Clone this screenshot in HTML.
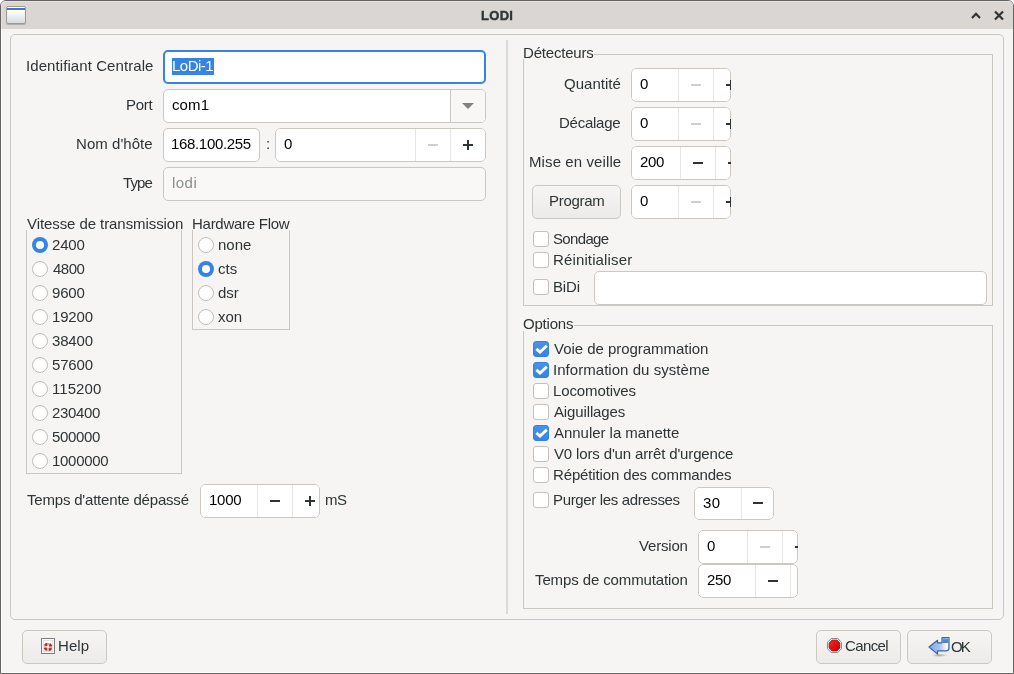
<!DOCTYPE html><html><head><meta charset="utf-8"><style>
html,body{margin:0;padding:0;width:1014px;height:674px;overflow:hidden;background:#fff}
.t{position:absolute;white-space:nowrap;line-height:20px;font-family:"Liberation Sans",sans-serif;will-change:transform}
</style></head><body>
<div style="position:absolute;left:0px;top:0px;width:1014px;height:674px;box-sizing:border-box;background:#f6f5f4;border:1px solid #656462;border-radius:6px 6px 0 0;box-shadow:inset 1px -1px 0 #fdfcfb"></div>
<div style="position:absolute;left:1px;top:1px;width:1012px;height:28px;box-sizing:border-box;background:#dad6d2;border-radius:5px 5px 0 0;box-shadow:inset 1px 1px 0 #e6e3e0"></div>
<div style="position:absolute;left:6px;top:6px;width:20px;height:18px;box-sizing:border-box;background:linear-gradient(#ffffff 20%,#d8dcdc);border:1px solid #9a9a9a;border-radius:2px;box-shadow:0 1px 0 #b0b0b0"></div>
<div style="position:absolute;left:7px;top:8px;width:18px;height:2px;box-sizing:border-box;background:#4b78b6"></div>
<div class="t" style="left:481.00px;top:6px;color:#2e3436;font-size:13px;font-weight:bold;letter-spacing:0.300px;color:#2e3436;-webkit-text-stroke:0.4px #2e3436;">LODI</div>
<svg style="position:absolute;left:968px;top:8px" width="16" height="14"><path d="M4 10 L8 5.8 L12 10" fill="none" stroke="#2e3436" stroke-width="2.2"/></svg>
<svg style="position:absolute;left:990px;top:8px" width="18" height="16"><path d="M5 3.5 L13 11.5 M13 3.5 L5 11.5" fill="none" stroke="#2e3436" stroke-width="2.2"/></svg>
<div style="position:absolute;left:10px;top:34px;width:994px;height:586px;box-sizing:border-box;border:1px solid #cdc7c2;border-radius:5px"></div>
<div style="position:absolute;left:506px;top:40px;width:2px;height:574px;box-sizing:border-box;background:#dcdad7"></div>
<div class="t" style="left:26.00px;top:56px;color:#2e3436;font-size:15px;font-weight:normal;letter-spacing:0.079px;">Identifiant Centrale</div>
<div style="position:absolute;left:163px;top:50px;width:323px;height:34px;box-sizing:border-box;background:#fff;border:2px solid #3584e4;border-radius:5px"></div>
<div style="position:absolute;left:172px;top:58px;width:42px;height:17px;box-sizing:border-box;background:#3584e4"></div>
<div class="t" style="left:172.00px;top:56px;color:#fff;font-size:15px;font-weight:normal;letter-spacing:-0.500px;">LoDi-1</div>
<div class="t" style="left:126.00px;top:95px;color:#2e3436;font-size:15px;font-weight:normal;letter-spacing:-0.300px;">Port</div>
<div style="position:absolute;left:163px;top:89px;width:323px;height:34px;box-sizing:border-box;background:#fff;border:1px solid #cdc7c2;border-radius:5px;overflow:hidden"><div style="position:absolute;left:286px;top:0;width:36px;height:34px;background:#f8f7f6;border-left:1px solid #cdc7c2"></div></div>
<svg style="position:absolute;left:461px;top:102px" width="14" height="8"><path d="M1 1 L13 1 L7 7 Z" fill="#7e8283"/></svg>
<div class="t" style="left:172.00px;top:95px;color:#000;font-size:15px;font-weight:normal;letter-spacing:0.100px;">com1</div>
<div class="t" style="left:76.00px;top:134px;color:#2e3436;font-size:15px;font-weight:normal;letter-spacing:0.044px;">Nom d'hôte</div>
<div style="position:absolute;left:163px;top:128px;width:97px;height:34px;box-sizing:border-box;background:#fff;border:1px solid #cdc7c2;border-radius:5px"></div>
<div class="t" style="left:171.00px;top:134px;color:#000;font-size:15px;font-weight:normal;letter-spacing:-0.330px;">168.100.255</div>
<div class="t" style="left:266.00px;top:134px;color:#2e3436;font-size:15px;font-weight:normal;letter-spacing:0.000px;">:</div>
<div style="position:absolute;left:275px;top:128px;width:211px;height:34px;background:#fff;border-radius:5px;overflow:hidden">
<div style="position:absolute;left:0;top:0;width:211px;height:34px;box-sizing:border-box;border:1px solid #cdc7c2;border-radius:5px"></div>
<div style="position:absolute;left:140px;top:1px;width:1px;height:32px;background:#e8e6e3"></div>
<div style="position:absolute;left:175px;top:1px;width:1px;height:32px;background:#e8e6e3"></div>
<div style="position:absolute;left:153px;top:16px;width:10px;height:2px;background:#cfcfcf"></div>
<div style="position:absolute;left:188px;top:16px;width:10px;height:2px;background:#2e3436"></div>
<div style="position:absolute;left:192px;top:12px;width:2px;height:10px;background:#2e3436"></div>
</div>
<div class="t" style="left:284.00px;top:134px;color:#000;font-size:15px;font-weight:normal;letter-spacing:0.000px;">0</div>
<div class="t" style="left:123.00px;top:173px;color:#2e3436;font-size:15px;font-weight:normal;letter-spacing:-0.867px;">Type</div>
<div style="position:absolute;left:163px;top:167px;width:323px;height:34px;box-sizing:border-box;background:#f9f8f7;border:1px solid #cdc7c2;border-radius:5px"></div>
<div class="t" style="left:172.00px;top:173px;color:#8b8e8f;font-size:15px;font-weight:normal;letter-spacing:0.467px;">lodi</div>
<div class="t" style="left:27.00px;top:214px;color:#2e3436;font-size:15px;font-weight:normal;letter-spacing:-0.077px;">Vitesse de transmission</div>
<div style="position:absolute;left:26px;top:230px;width:156px;height:244px;box-sizing:border-box;border:1px solid #cdc7c2;border-top:none"></div>
<div class="t" style="left:192.00px;top:214px;color:#2e3436;font-size:15px;font-weight:normal;letter-spacing:-0.267px;">Hardware Flow</div>
<div style="position:absolute;left:192px;top:230px;width:98px;height:100px;box-sizing:border-box;border:1px solid #cdc7c2;border-top:none"></div>
<div style="position:absolute;left:32px;top:237px;width:16px;height:16px;box-sizing:border-box;background:#3584e4;border-radius:50%"></div>
<div style="position:absolute;left:36px;top:241px;width:8px;height:8px;box-sizing:border-box;background:#fff;border-radius:50%"></div>
<div class="t" style="left:52.00px;top:235px;color:#2e3436;font-size:15px;font-weight:normal;letter-spacing:-0.193px;">2400</div>
<div style="position:absolute;left:32px;top:261px;width:16px;height:16px;box-sizing:border-box;background:#fff;border:1px solid #c2bcb6;border-radius:50%"></div>
<div class="t" style="left:53.00px;top:259px;color:#2e3436;font-size:15px;font-weight:normal;letter-spacing:-0.527px;">4800</div>
<div style="position:absolute;left:32px;top:285px;width:16px;height:16px;box-sizing:border-box;background:#fff;border:1px solid #c2bcb6;border-radius:50%"></div>
<div class="t" style="left:52.00px;top:283px;color:#2e3436;font-size:15px;font-weight:normal;letter-spacing:-0.193px;">9600</div>
<div style="position:absolute;left:32px;top:309px;width:16px;height:16px;box-sizing:border-box;background:#fff;border:1px solid #c2bcb6;border-radius:50%"></div>
<div class="t" style="left:52.00px;top:307px;color:#2e3436;font-size:15px;font-weight:normal;letter-spacing:-0.162px;">19200</div>
<div style="position:absolute;left:32px;top:333px;width:16px;height:16px;box-sizing:border-box;background:#fff;border:1px solid #c2bcb6;border-radius:50%"></div>
<div class="t" style="left:52.00px;top:331px;color:#2e3436;font-size:15px;font-weight:normal;letter-spacing:-0.162px;">38400</div>
<div style="position:absolute;left:32px;top:357px;width:16px;height:16px;box-sizing:border-box;background:#fff;border:1px solid #c2bcb6;border-radius:50%"></div>
<div class="t" style="left:52.00px;top:355px;color:#2e3436;font-size:15px;font-weight:normal;letter-spacing:-0.162px;">57600</div>
<div style="position:absolute;left:32px;top:381px;width:16px;height:16px;box-sizing:border-box;background:#fff;border:1px solid #c2bcb6;border-radius:50%"></div>
<div class="t" style="left:52.00px;top:379px;color:#2e3436;font-size:15px;font-weight:normal;letter-spacing:0.056px;">115200</div>
<div style="position:absolute;left:32px;top:405px;width:16px;height:16px;box-sizing:border-box;background:#fff;border:1px solid #c2bcb6;border-radius:50%"></div>
<div class="t" style="left:52.00px;top:403px;color:#2e3436;font-size:15px;font-weight:normal;letter-spacing:-0.344px;">230400</div>
<div style="position:absolute;left:32px;top:429px;width:16px;height:16px;box-sizing:border-box;background:#fff;border:1px solid #c2bcb6;border-radius:50%"></div>
<div class="t" style="left:52.00px;top:427px;color:#2e3436;font-size:15px;font-weight:normal;letter-spacing:-0.344px;">500000</div>
<div style="position:absolute;left:32px;top:453px;width:16px;height:16px;box-sizing:border-box;background:#fff;border:1px solid #c2bcb6;border-radius:50%"></div>
<div class="t" style="left:52.00px;top:451px;color:#2e3436;font-size:15px;font-weight:normal;letter-spacing:-0.298px;">1000000</div>
<div style="position:absolute;left:198px;top:237px;width:16px;height:16px;box-sizing:border-box;background:#fff;border:1px solid #c2bcb6;border-radius:50%"></div>
<div class="t" style="left:218.00px;top:235px;color:#2e3436;font-size:15px;font-weight:normal;letter-spacing:0.000px;">none</div>
<div style="position:absolute;left:198px;top:261px;width:16px;height:16px;box-sizing:border-box;background:#3584e4;border-radius:50%"></div>
<div style="position:absolute;left:202px;top:265px;width:8px;height:8px;box-sizing:border-box;background:#fff;border-radius:50%"></div>
<div class="t" style="left:218.00px;top:259px;color:#2e3436;font-size:15px;font-weight:normal;letter-spacing:0.000px;">cts</div>
<div style="position:absolute;left:198px;top:285px;width:16px;height:16px;box-sizing:border-box;background:#fff;border:1px solid #c2bcb6;border-radius:50%"></div>
<div class="t" style="left:218.00px;top:283px;color:#2e3436;font-size:15px;font-weight:normal;letter-spacing:0.000px;">dsr</div>
<div style="position:absolute;left:198px;top:309px;width:16px;height:16px;box-sizing:border-box;background:#fff;border:1px solid #c2bcb6;border-radius:50%"></div>
<div class="t" style="left:218.00px;top:307px;color:#2e3436;font-size:15px;font-weight:normal;letter-spacing:0.000px;">xon</div>
<div class="t" style="left:27.00px;top:490px;color:#2e3436;font-size:15px;font-weight:normal;letter-spacing:-0.195px;">Temps d'attente dépassé</div>
<div style="position:absolute;left:200px;top:484px;width:120px;height:34px;background:#fff;border-radius:5px;overflow:hidden">
<div style="position:absolute;left:0;top:0;width:120px;height:34px;box-sizing:border-box;border:1px solid #cdc7c2;border-radius:5px"></div>
<div style="position:absolute;left:57px;top:1px;width:1px;height:32px;background:#e8e6e3"></div>
<div style="position:absolute;left:92px;top:1px;width:1px;height:32px;background:#e8e6e3"></div>
<div style="position:absolute;left:70px;top:16px;width:10px;height:2px;background:#2e3436"></div>
<div style="position:absolute;left:105px;top:16px;width:10px;height:2px;background:#2e3436"></div>
<div style="position:absolute;left:109px;top:12px;width:2px;height:10px;background:#2e3436"></div>
</div>
<div class="t" style="left:209.00px;top:490px;color:#000;font-size:15px;font-weight:normal;letter-spacing:-0.260px;">1000</div>
<div class="t" style="left:325.00px;top:490px;color:#2e3436;font-size:15px;font-weight:normal;letter-spacing:-0.600px;">mS</div>
<div style="position:absolute;left:523px;top:54px;width:470px;height:252px;box-sizing:border-box;border:1px solid #cdc7c2"></div>
<div style="position:absolute;left:524px;top:45px;width:70px;height:13px;box-sizing:border-box;background:#f6f5f4"></div>
<div style="position:absolute;left:522px;top:54px;width:3px;height:5px;box-sizing:border-box;background:#f6f5f4"></div>
<div class="t" style="left:523.00px;top:43px;color:#2e3436;font-size:15px;font-weight:normal;letter-spacing:-0.200px;">Détecteurs</div>
<div class="t" style="left:564.00px;top:74px;color:#2e3436;font-size:15px;font-weight:normal;letter-spacing:0.029px;">Quantité</div>
<div style="position:absolute;left:631px;top:68px;width:100px;height:34px;background:#fff;border-radius:5px;overflow:hidden">
<div style="position:absolute;left:0;top:0;width:100px;height:34px;box-sizing:border-box;border:1px solid #cdc7c2;border-radius:5px"></div>
<div style="position:absolute;left:47px;top:1px;width:1px;height:32px;background:#e8e6e3"></div>
<div style="position:absolute;left:82px;top:1px;width:1px;height:32px;background:#e8e6e3"></div>
<div style="position:absolute;left:60px;top:16px;width:10px;height:2px;background:#cfcfcf"></div>
<div style="position:absolute;left:95px;top:16px;width:10px;height:2px;background:#2e3436"></div>
<div style="position:absolute;left:99px;top:12px;width:2px;height:10px;background:#2e3436"></div>
</div>
<div class="t" style="left:640.00px;top:74px;color:#000;font-size:15px;font-weight:normal;letter-spacing:0.000px;">0</div>
<div class="t" style="left:559.00px;top:113px;color:#2e3436;font-size:15px;font-weight:normal;letter-spacing:-0.257px;">Décalage</div>
<div style="position:absolute;left:631px;top:107px;width:100px;height:34px;background:#fff;border-radius:5px;overflow:hidden">
<div style="position:absolute;left:0;top:0;width:100px;height:34px;box-sizing:border-box;border:1px solid #cdc7c2;border-radius:5px"></div>
<div style="position:absolute;left:47px;top:1px;width:1px;height:32px;background:#e8e6e3"></div>
<div style="position:absolute;left:82px;top:1px;width:1px;height:32px;background:#e8e6e3"></div>
<div style="position:absolute;left:60px;top:16px;width:10px;height:2px;background:#cfcfcf"></div>
<div style="position:absolute;left:95px;top:16px;width:10px;height:2px;background:#2e3436"></div>
<div style="position:absolute;left:99px;top:12px;width:2px;height:10px;background:#2e3436"></div>
</div>
<div class="t" style="left:640.00px;top:113px;color:#000;font-size:15px;font-weight:normal;letter-spacing:0.000px;">0</div>
<div class="t" style="left:529.00px;top:152px;color:#2e3436;font-size:15px;font-weight:normal;letter-spacing:0.100px;">Mise en veille</div>
<div style="position:absolute;left:631px;top:146px;width:100px;height:34px;background:#fff;border-radius:5px;overflow:hidden">
<div style="position:absolute;left:0;top:0;width:100px;height:34px;box-sizing:border-box;border:1px solid #cdc7c2;border-radius:5px"></div>
<div style="position:absolute;left:49px;top:1px;width:1px;height:32px;background:#e8e6e3"></div>
<div style="position:absolute;left:84px;top:1px;width:1px;height:32px;background:#e8e6e3"></div>
<div style="position:absolute;left:62px;top:16px;width:10px;height:2px;background:#2e3436"></div>
<div style="position:absolute;left:97px;top:16px;width:10px;height:2px;background:#2e3436"></div>
<div style="position:absolute;left:101px;top:12px;width:2px;height:10px;background:#2e3436"></div>
</div>
<div class="t" style="left:640.00px;top:152px;color:#000;font-size:15px;font-weight:normal;letter-spacing:-0.355px;">200</div>
<div style="position:absolute;left:631px;top:185px;width:100px;height:34px;background:#fff;border-radius:5px;overflow:hidden">
<div style="position:absolute;left:0;top:0;width:100px;height:34px;box-sizing:border-box;border:1px solid #cdc7c2;border-radius:5px"></div>
<div style="position:absolute;left:47px;top:1px;width:1px;height:32px;background:#e8e6e3"></div>
<div style="position:absolute;left:82px;top:1px;width:1px;height:32px;background:#e8e6e3"></div>
<div style="position:absolute;left:60px;top:16px;width:10px;height:2px;background:#cfcfcf"></div>
<div style="position:absolute;left:95px;top:16px;width:10px;height:2px;background:#2e3436"></div>
<div style="position:absolute;left:99px;top:12px;width:2px;height:10px;background:#2e3436"></div>
</div>
<div class="t" style="left:640.00px;top:191px;color:#000;font-size:15px;font-weight:normal;letter-spacing:0.000px;">0</div>
<div style="position:absolute;left:532px;top:185px;width:89px;height:34px;box-sizing:border-box;background:linear-gradient(#f6f5f4,#edebe9);border:1px solid #cdc7c2;border-radius:5px"></div>
<div class="t" style="left:549.00px;top:191px;color:#2e3436;font-size:15px;font-weight:normal;letter-spacing:-0.300px;">Program</div>
<div style="position:absolute;left:533px;top:231px;width:16px;height:16px;box-sizing:border-box;background:#fff;border:1px solid #c6c0ba;border-radius:3px"></div>
<div class="t" style="left:553.00px;top:229px;color:#2e3436;font-size:15px;font-weight:normal;letter-spacing:-0.650px;">Sondage</div>
<div style="position:absolute;left:533px;top:252px;width:16px;height:16px;box-sizing:border-box;background:#fff;border:1px solid #c6c0ba;border-radius:3px"></div>
<div class="t" style="left:553.00px;top:250px;color:#2e3436;font-size:15px;font-weight:normal;letter-spacing:0.133px;">Réinitialiser</div>
<div style="position:absolute;left:533px;top:279px;width:16px;height:16px;box-sizing:border-box;background:#fff;border:1px solid #c6c0ba;border-radius:3px"></div>
<div class="t" style="left:553.00px;top:277px;color:#2e3436;font-size:15px;font-weight:normal;letter-spacing:-0.133px;">BiDi</div>
<div style="position:absolute;left:594px;top:271px;width:393px;height:34px;box-sizing:border-box;background:#fff;border:1px solid #cdc7c2;border-radius:5px"></div>
<div style="position:absolute;left:523px;top:325px;width:470px;height:284px;box-sizing:border-box;border:1px solid #cdc7c2"></div>
<div style="position:absolute;left:522px;top:318px;width:52px;height:13px;box-sizing:border-box;background:#f6f5f4"></div>
<div class="t" style="left:523.00px;top:314px;color:#2e3436;font-size:15px;font-weight:normal;letter-spacing:-0.200px;">Options</div>
<div style="position:absolute;left:533px;top:341px;width:16px;height:16px;box-sizing:border-box;background:linear-gradient(#4a92ea,#3584e4);border:1px solid #3381e0;border-radius:3px"></div>
<svg style="position:absolute;left:533px;top:341px" width="16" height="16" viewBox="0 0 16 16"><path d="M3.4 7.8 L7 11 L13.8 4.8" fill="none" stroke="#fff" stroke-width="2.9" stroke-linecap="butt" stroke-linejoin="miter"/></svg>
<div class="t" style="left:554.00px;top:339px;color:#2e3436;font-size:15px;font-weight:normal;letter-spacing:-0.035px;">Voie de programmation</div>
<div style="position:absolute;left:533px;top:362px;width:16px;height:16px;box-sizing:border-box;background:linear-gradient(#4a92ea,#3584e4);border:1px solid #3381e0;border-radius:3px"></div>
<svg style="position:absolute;left:533px;top:362px" width="16" height="16" viewBox="0 0 16 16"><path d="M3.4 7.8 L7 11 L13.8 4.8" fill="none" stroke="#fff" stroke-width="2.9" stroke-linecap="butt" stroke-linejoin="miter"/></svg>
<div class="t" style="left:553.00px;top:360px;color:#2e3436;font-size:15px;font-weight:normal;letter-spacing:0.043px;">Information du système</div>
<div style="position:absolute;left:533px;top:383px;width:16px;height:16px;box-sizing:border-box;background:#fff;border:1px solid #c6c0ba;border-radius:3px"></div>
<div class="t" style="left:553.00px;top:381px;color:#2e3436;font-size:15px;font-weight:normal;letter-spacing:-0.120px;">Locomotives</div>
<div style="position:absolute;left:533px;top:404px;width:16px;height:16px;box-sizing:border-box;background:#fff;border:1px solid #c6c0ba;border-radius:3px"></div>
<div class="t" style="left:554.00px;top:402px;color:#2e3436;font-size:15px;font-weight:normal;letter-spacing:-0.130px;">Aiguillages</div>
<div style="position:absolute;left:533px;top:425px;width:16px;height:16px;box-sizing:border-box;background:linear-gradient(#4a92ea,#3584e4);border:1px solid #3381e0;border-radius:3px"></div>
<svg style="position:absolute;left:533px;top:425px" width="16" height="16" viewBox="0 0 16 16"><path d="M3.4 7.8 L7 11 L13.8 4.8" fill="none" stroke="#fff" stroke-width="2.9" stroke-linecap="butt" stroke-linejoin="miter"/></svg>
<div class="t" style="left:554.00px;top:423px;color:#2e3436;font-size:15px;font-weight:normal;letter-spacing:-0.035px;">Annuler la manette</div>
<div style="position:absolute;left:533px;top:446px;width:16px;height:16px;box-sizing:border-box;background:#fff;border:1px solid #c6c0ba;border-radius:3px"></div>
<div class="t" style="left:554.00px;top:444px;color:#2e3436;font-size:15px;font-weight:normal;letter-spacing:-0.144px;">V0 lors d'un arrêt d'urgence</div>
<div style="position:absolute;left:533px;top:467px;width:16px;height:16px;box-sizing:border-box;background:#fff;border:1px solid #c6c0ba;border-radius:3px"></div>
<div class="t" style="left:553.00px;top:465px;color:#2e3436;font-size:15px;font-weight:normal;letter-spacing:-0.139px;">Répétition des commandes</div>
<div style="position:absolute;left:533px;top:492px;width:16px;height:16px;box-sizing:border-box;background:#fff;border:1px solid #c6c0ba;border-radius:3px"></div>
<div class="t" style="left:553.00px;top:490px;color:#2e3436;font-size:15px;font-weight:normal;letter-spacing:-0.350px;">Purger les adresses</div>
<div style="position:absolute;left:694px;top:487px;width:80px;height:33px;background:#fff;border-radius:5px;overflow:hidden">
<div style="position:absolute;left:0;top:0;width:80px;height:33px;box-sizing:border-box;border:1px solid #cdc7c2;border-radius:5px"></div>
<div style="position:absolute;left:47px;top:1px;width:1px;height:31px;background:#e8e6e3"></div>
<div style="position:absolute;left:59px;top:15px;width:10px;height:2px;background:#2e3436"></div>
</div>
<div class="t" style="left:703.00px;top:493px;color:#000;font-size:15px;font-weight:normal;letter-spacing:0.360px;">30</div>
<div class="t" style="left:639.00px;top:536px;color:#2e3436;font-size:15px;font-weight:normal;letter-spacing:-0.183px;">Version</div>
<div style="position:absolute;left:698px;top:530px;width:100px;height:34px;background:#fff;border-radius:5px;overflow:hidden">
<div style="position:absolute;left:0;top:0;width:100px;height:34px;box-sizing:border-box;border:1px solid #cdc7c2;border-radius:5px"></div>
<div style="position:absolute;left:49px;top:1px;width:1px;height:32px;background:#e8e6e3"></div>
<div style="position:absolute;left:84px;top:1px;width:1px;height:32px;background:#e8e6e3"></div>
<div style="position:absolute;left:62px;top:16px;width:10px;height:2px;background:#cfcfcf"></div>
<div style="position:absolute;left:97px;top:16px;width:10px;height:2px;background:#2e3436"></div>
<div style="position:absolute;left:101px;top:12px;width:2px;height:10px;background:#2e3436"></div>
</div>
<div class="t" style="left:707.00px;top:536px;color:#000;font-size:15px;font-weight:normal;letter-spacing:0.000px;">0</div>
<div class="t" style="left:535.00px;top:570px;color:#2e3436;font-size:15px;font-weight:normal;letter-spacing:-0.116px;">Temps de commutation</div>
<div style="position:absolute;left:698px;top:564px;width:100px;height:34px;background:#fff;border-radius:5px;overflow:hidden">
<div style="position:absolute;left:0;top:0;width:100px;height:34px;box-sizing:border-box;border:1px solid #cdc7c2;border-radius:5px"></div>
<div style="position:absolute;left:57px;top:1px;width:1px;height:32px;background:#e8e6e3"></div>
<div style="position:absolute;left:92px;top:1px;width:1px;height:32px;background:#e8e6e3"></div>
<div style="position:absolute;left:70px;top:16px;width:10px;height:2px;background:#2e3436"></div>
<div style="position:absolute;left:103px;top:16px;width:10px;height:2px;background:#2e3436"></div>
<div style="position:absolute;left:107px;top:12px;width:2px;height:10px;background:#2e3436"></div>
</div>
<div class="t" style="left:707.00px;top:570px;color:#000;font-size:15px;font-weight:normal;letter-spacing:-0.355px;">250</div>
<div style="position:absolute;left:22px;top:630px;width:85px;height:34px;box-sizing:border-box;background:linear-gradient(#f6f5f4,#edebe9);border:1px solid #cdc7c2;border-radius:5px"></div>
<div style="position:absolute;left:41px;top:638px;width:14px;height:16px;box-sizing:border-box;background:#fff;border:1px solid #777"></div>
<svg style="position:absolute;left:40px;top:637px" width="16" height="18" viewBox="0 0 16 18"><rect x="1.5" y="1.5" width="13" height="15" rx="1" fill="#fff" stroke="#7a7c7a" stroke-width="1"/><rect x="3.3" y="3.3" width="9.4" height="11.4" fill="none" stroke="#d4d6d4" stroke-width="0.7"/><circle cx="8" cy="10" r="3.0" fill="none" stroke="#b9bdbb" stroke-width="2.6"/><circle cx="8" cy="10" r="3.0" fill="none" stroke="#dc1c1c" stroke-width="2.8" stroke-dasharray="2.356 2.356" stroke-dashoffset="-1.178"/><circle cx="8" cy="10" r="1.1" fill="#fff"/></svg>
<div class="t" style="left:58.00px;top:636px;color:#2e3436;font-size:15px;font-weight:normal;letter-spacing:0.100px;">Help</div>
<div style="position:absolute;left:816px;top:630px;width:85px;height:34px;box-sizing:border-box;background:linear-gradient(#f6f5f4,#edebe9);border:1px solid #cdc7c2;border-radius:5px"></div>
<svg style="position:absolute;left:827px;top:638px" width="15" height="15" viewBox="0 0 15 15"><defs><linearGradient id="rg" x1="0" y1="0" x2="1" y2="1"><stop offset="0" stop-color="#f02a2a"/><stop offset="1" stop-color="#c40000"/></linearGradient></defs><path d="M4.3 0.5 L10.7 0.5 L14.5 4.3 L14.5 10.7 L10.7 14.5 L4.3 14.5 L0.5 10.7 L0.5 4.3 Z" fill="#f2f6f4" stroke="#878b89" stroke-width="1"/><path d="M5 2 L10 2 L13 5 L13 10 L10 13 L5 13 L2 10 L2 5 Z" fill="url(#rg)" stroke="#b80000" stroke-width="0.6"/></svg>
<div class="t" style="left:845.00px;top:636px;color:#2e3436;font-size:15px;font-weight:normal;letter-spacing:-0.600px;">Cancel</div>
<div style="position:absolute;left:907px;top:630px;width:85px;height:34px;box-sizing:border-box;background:linear-gradient(#f6f5f4,#edebe9);border:1px solid #cdc7c2;border-radius:5px"></div>
<svg style="position:absolute;left:927px;top:635px" width="24" height="24" viewBox="0 0 24 24">
<defs><linearGradient id="ag" x1="0" y1="0" x2="1" y2="0"><stop offset="0" stop-color="#7fa8dc"/><stop offset="0.55" stop-color="#a9c6ea"/><stop offset="0.9" stop-color="#ffffff"/><stop offset="1" stop-color="#c8daf0"/></linearGradient>
<linearGradient id="sg" x1="0" y1="0" x2="0" y2="1"><stop offset="0" stop-color="#6f9ad4"/><stop offset="1" stop-color="#3f74bf"/></linearGradient>
<radialGradient id="shg"><stop offset="0" stop-color="#000" stop-opacity="0.3"/><stop offset="1" stop-color="#000" stop-opacity="0"/></radialGradient></defs>
<ellipse cx="12.5" cy="20.3" rx="8" ry="1.8" fill="url(#shg)"/>
<path d="M2 12 L10.5 5.3 L10.5 7.8 L15 7.8 L15 2.5 L22 2.5 L22 13 Q22 15.8 19 15.8 L10.5 15.8 L10.5 19.1 Z" fill="url(#ag)" stroke="#3465a8" stroke-width="1.2" stroke-linejoin="round"/>
<rect x="15.8" y="3.3" width="5.4" height="4.6" fill="url(#sg)"/>
</svg>
<div class="t" style="left:951.00px;top:637px;color:#2e3436;font-size:15px;font-weight:normal;letter-spacing:-2.000px;">OK</div>
</body></html>
